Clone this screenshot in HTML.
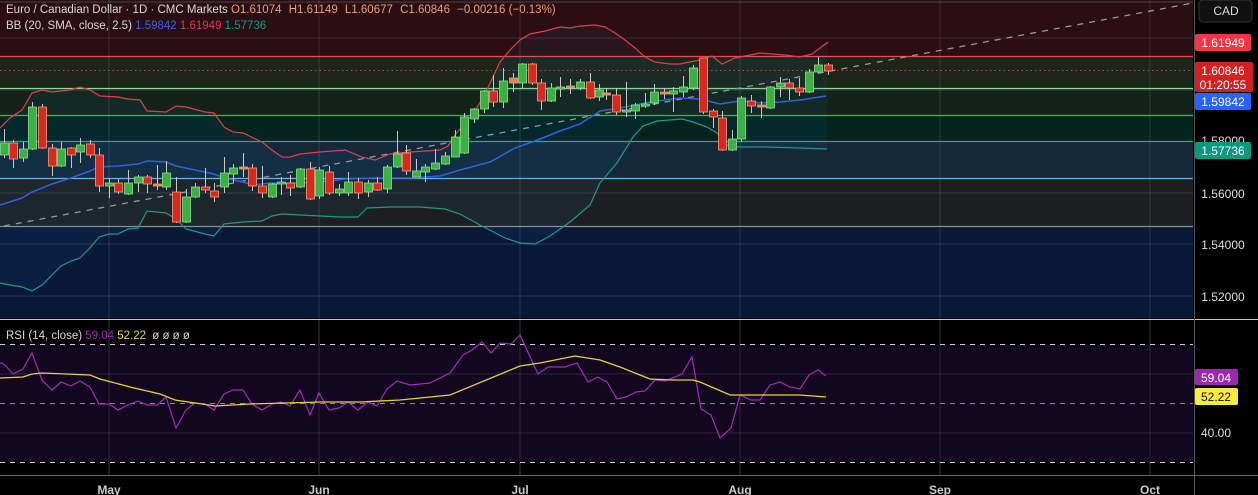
<!DOCTYPE html>
<html><head><meta charset="utf-8"><style>
html,body{margin:0;padding:0;background:#000;width:1258px;height:495px;overflow:hidden}
svg{display:block}
text{font-family:"Liberation Sans",sans-serif}
</style></head><body>
<svg id="s" width="1258" height="495" viewBox="0 0 1258 495" xmlns="http://www.w3.org/2000/svg">
<rect x="0" y="0" width="1258" height="495" fill="#000"/>
<rect x="0" y="0" width="1193" height="56" fill="#2a0e13"/>
<rect x="0" y="56" width="1193" height="32" fill="#1b2519"/>
<rect x="0" y="88" width="1193" height="27" fill="#13231a"/>
<rect x="0" y="115" width="1193" height="26" fill="#04231f"/>
<rect x="0" y="141" width="1193" height="37" fill="#14283a"/>
<rect x="0" y="178" width="1193" height="48" fill="#1d1e21"/>
<rect x="0" y="226" width="1193" height="92" fill="#0a1838"/>
<line x1="0" y1="2" x2="1193" y2="2" stroke="#444" stroke-width="1"/>
<g stroke="#ffffff" stroke-opacity="0.12" stroke-width="1">
<line x1="0" y1="38" x2="1193" y2="38"/><line x1="0" y1="90" x2="1193" y2="90"/><line x1="0" y1="193" x2="1193" y2="193"/><line x1="0" y1="244" x2="1193" y2="244"/><line x1="0" y1="296" x2="1193" y2="296"/>
<line x1="109" y1="0" x2="109" y2="475"/><line x1="319" y1="0" x2="319" y2="475"/><line x1="520" y1="0" x2="520" y2="475"/><line x1="740" y1="0" x2="740" y2="475"/><line x1="940" y1="0" x2="940" y2="475"/><line x1="1150" y1="0" x2="1150" y2="475"/>
</g>
<line x1="0" y1="56.5" x2="1193" y2="56.5" stroke="#e05050" stroke-width="1.2"/>
<line x1="0" y1="70.5" x2="1193" y2="70.5" stroke="#d84040" stroke-width="1" stroke-dasharray="1.5,3"/>
<line x1="0" y1="88.5" x2="1193" y2="88.5" stroke="#8fd88f" stroke-width="1.2"/>
<line x1="0" y1="115.5" x2="1193" y2="115.5" stroke="#4caf50" stroke-width="1.2"/>
<line x1="0" y1="141.5" x2="1193" y2="141.5" stroke="#26a69a" stroke-width="1.2"/>
<line x1="0" y1="178.5" x2="1193" y2="178.5" stroke="#64b5f6" stroke-width="1.2"/>
<line x1="0" y1="226.5" x2="1193" y2="226.5" stroke="#8a8f99" stroke-width="1.2"/>
<line x1="4" y1="226" x2="1193" y2="3" stroke="#9a9a9a" stroke-width="1.3" stroke-dasharray="6,6"/>
<g id="bb"></g>
<g id="cd"></g>
<line x1="0" y1="319.5" x2="1258" y2="319.5" stroke="#c8c8c8" stroke-width="1"/>
<line x1="1194.5" y1="0" x2="1194.5" y2="495" stroke="#555" stroke-width="1"/>
<rect x="0" y="344" width="1193" height="118" fill="#13061f"/>
<g stroke="#ffffff" stroke-opacity="0.12"><line x1="0" y1="374" x2="1193" y2="374"/><line x1="0" y1="433" x2="1193" y2="433"/>
<line x1="109" y1="320" x2="109" y2="475"/><line x1="319" y1="320" x2="319" y2="475"/><line x1="520" y1="320" x2="520" y2="475"/><line x1="740" y1="320" x2="740" y2="475"/><line x1="940" y1="320" x2="940" y2="475"/><line x1="1150" y1="320" x2="1150" y2="475"/></g>
<g stroke="#cfcfcf" stroke-dasharray="5,5" stroke-width="1"><line x1="0" y1="344.5" x2="1193" y2="344.5"/><line x1="0" y1="462.5" x2="1193" y2="462.5"/></g>
<line x1="0" y1="403.5" x2="1193" y2="403.5" stroke="#888" stroke-dasharray="5,5"/>
<polyline fill="none" stroke="#a22cb8" stroke-width="1.2" points="0,363 4,364 13,374 23,369 32,353 42,380 52,390 61,382 71,386 80,381 90,387 99,404 109,404 118,410 128,405 138,401 147,405 157,405 166,397 176,428 186,410 195,403 205,404 214,410 224,394 233,390 243,390 252,404 262,410 272,404 281,402 290,406 300,390 310,415 319,393 329,410 339,408 348,402 358,410 368,402 377,406 387,389 397,381 410,385 430,383 450,373 463,355 472,350 482,342 491,353 500,343 511,344 520,335 538,374 548,367 565,367 577,363 588,382 598,377 607,382 617,399 626,397 636,392 645,391 655,380 665,381 682,374 692,357 701,409 711,415 720,438 731,428 740,395 751,400 760,400 770,385 780,382 790,387 800,389 809,375 818,370 826,376"/>
<polyline fill="none" stroke="#e6d23a" stroke-width="1.3" points="0,378 23,377 32,374 42,373 90,375 100,379 130,387 160,394 175,400 215,406 250,404 320,402 360,402 400,400 450,395 520,366 540,363 575,356 600,360 620,367 650,379 673,380 693,380 700,382 730,395 740,395 800,395 826,397"/>
<line x1="0" y1="475.5" x2="1258" y2="475.5" stroke="#666" stroke-width="1"/>
<text x="6" y="13" font-size="11.5" fill="#d8d8d8">Euro / Canadian Dollar · 1D · CMC Markets <tspan fill="#f0a070">O1.61074</tspan> <tspan fill="#f0a070" dx="4">H1.61149</tspan> <tspan fill="#f0a070" dx="4">L1.60677</tspan> <tspan fill="#f0a070" dx="4">C1.60846</tspan> <tspan fill="#f0a070" dx="4">−0.00216 (−0.13%)</tspan></text>
<text x="6" y="29" font-size="11.5" fill="#d8d8d8">BB (20, SMA, close, 2.5) <tspan fill="#3d62e0">1.59842</tspan> <tspan fill="#e23a4a">1.61949</tspan> <tspan fill="#159a84">1.57736</tspan></text>
<text x="6" y="339" font-size="11.5" fill="#d8d8d8">RSI (14, close) <tspan fill="#9c2ab0">59.04</tspan> <tspan fill="#e8d83a">52.22</tspan> <tspan fill="#d8d8d8" dx="3">ø  ø  ø  ø</tspan></text>
<rect x="1199" y="0" width="53" height="22" rx="4" fill="#111" stroke="#333"/>
<text x="1218" y="15" font-size="12" fill="#ddd" text-anchor="middle" dx="8">CAD</text>
<rect x="1195" y="34" width="56" height="17" rx="2" fill="#f23645"/>
<text x="1223" y="47" font-size="12" fill="#fff" text-anchor="middle">1.61949</text>
<rect x="1195" y="62" width="58" height="30" rx="2" fill="#d32020"/>
<text x="1223" y="75" font-size="12" fill="#fff" text-anchor="middle">1.60846</text>
<text x="1223" y="89" font-size="12" fill="#fff" text-anchor="middle">01:20:55</text>
<rect x="1195" y="93" width="56" height="17" rx="2" fill="#2962ff"/>
<text x="1223" y="106" font-size="12" fill="#fff" text-anchor="middle">1.59842</text>
<text x="1223" y="145" font-size="12" fill="#ddd" text-anchor="middle">1.58000</text>
<rect x="1195" y="142" width="56" height="17" rx="2" fill="#089981"/>
<text x="1223" y="155" font-size="12" fill="#fff" text-anchor="middle">1.57736</text>
<text x="1223" y="198" font-size="12" fill="#ddd" text-anchor="middle">1.56000</text>
<text x="1223" y="249" font-size="12" fill="#ddd" text-anchor="middle">1.54000</text>
<text x="1223" y="301" font-size="12" fill="#ddd" text-anchor="middle">1.52000</text>
<rect x="1195" y="369" width="43" height="16" rx="2" fill="#9c27b0"/>
<text x="1216" y="382" font-size="12" fill="#fff" text-anchor="middle">59.04</text>
<rect x="1195" y="388" width="43" height="17" rx="2" fill="#ffeb3b"/>
<text x="1216" y="401" font-size="12" fill="#111" text-anchor="middle">52.22</text>
<text x="1216" y="437" font-size="12" fill="#ddd" text-anchor="middle">40.00</text>
<g font-size="12" fill="#ccc" font-weight="bold" text-anchor="middle">
<text x="109" y="494">May</text><text x="319" y="494">Jun</text><text x="520" y="494">Jul</text><text x="740" y="494">Aug</text><text x="940" y="494">Sep</text><text x="1150" y="494">Oct</text></g>
</svg>
<script>
var NS="http://www.w3.org/2000/svg";
function el(p,t,a){var e=document.createElementNS(NS,t);for(var k in a)e.setAttribute(k,a[k]);p.appendChild(e);return e;}
var up="0,128 10,118 22,110 32,93 42,90 52,92 70,90 80,87 90,90 100,96 118,97 128,99 140,100 147,111 166,112 176,106 186,107 205,112 214,113 224,127 233,132 243,133 262,142 272,150 282,157 290,157 300,154 320,152 345,150 362,157 375,160 390,154 410,152 440,150 448,146 455,135 475,111 485,94 500,62 510,50 520,40 530,34 545,31 560,27 570,28 580,26 595,25 605,27 615,33 625,40 635,48 645,57 655,62 670,64 680,64 700,60 712,56 722,64 735,58 760,53 785,55 800,57 812,54 828,42";
var mid="0,205 22,198 32,192 52,184 71,178 90,171 99,167 118,166 138,164 147,161 166,162 176,166 195,170 214,174 224,178 243,182 252,185 272,183 300,183 330,181 345,179 375,178 410,178 440,176 460,170 490,162 515,148 535,141 560,131 580,124 600,111 620,108 650,102 680,98 700,99 720,104 740,101 760,103 780,102 800,100 826,96";
var lo="0,283 10,285 22,287 32,291 42,285 52,275 61,266 71,261 80,258 90,248 99,237 109,234 118,234 128,229 138,228 147,211 166,213 176,219 186,229 205,234 214,236 224,224 243,222 262,221 272,216 282,214 300,215 320,216 340,217 358,217 367,208 390,207 420,207 445,209 460,214 480,225 505,238 520,243 535,244 550,236 570,222 590,205 600,183 617,163 633,137 643,126 657,121 682,119 693,122 707,127 717,133 728,146 737,147 767,147 800,148 827,149";
var bb=document.getElementById("bb");
var rl=lo.split(" ").reverse().join(" ");
el(bb,"polygon",{points:up+" "+rl,fill:"#2196f3","fill-opacity":"0.06"});
el(bb,"polyline",{points:up,fill:"none",stroke:"#e0404f","stroke-width":"1.2"});
el(bb,"polyline",{points:mid,fill:"none",stroke:"#2f62e0","stroke-width":"1.5"});
el(bb,"polyline",{points:lo,fill:"none",stroke:"#1f9a8a","stroke-width":"1.2"});
var C=[[4,'G',143,155,129,158],[13,'R',143,159,140,168],[23,'G',149,158,142,162],[32,'G',107,149,102,150],[42,'R',107,148,104,149],[52,'R',148,166,144,176],[61,'G',149,166,142,167],[71,'R',148,155,147,168],[80,'G',145,152,138,163],[90,'R',144,155,140,158],[99,'R',155,186,148,192],[109,'G',183,186,179,198],[118,'R',183,192,179,194],[128,'G',183,194,170,195],[138,'G',177,183,175,192],[147,'R',177,184,175,193],[157,'D',184,186,165,190],[166,'G',173,187,161,190],[176,'R',192,222,177,223],[186,'G',197,222,189,223],[195,'G',187,197,183,198],[205,'R',187,190,168,193],[214,'R',191,197,183,202],[224,'G',173,187,157,193],[233,'G',168,174,164,183],[243,'D',167,169,153,177],[252,'R',168,186,164,191],[262,'R',186,193,166,198],[272,'G',184,197,183,198],[281,'G',182,184,177,195],[290,'R',183,188,175,196],[300,'G',169,187,168,188],[310,'R',169,199,162,200],[319,'G',170,196,167,199],[329,'R',172,193,166,195],[339,'G',189,193,184,196],[348,'G',182,193,172,196],[358,'R',182,193,178,199],[368,'G',183,192,180,197],[377,'R',183,190,177,191],[387,'G',167,189,165,193],[397,'G',154,167,131,168],[406,'R',153,171,145,175],[416,'G',171,177,159,177],[425,'G',167,172,164,182],[435,'G',163,169,149,170],[445,'G',156,164,152,165],[455,'G',137,157,130,157],[464,'G',117,153,113,154],[474,'G',109,119,108,123],[484,'G',91,109,90,113],[493,'R',91,102,75,107],[503,'G',81,102,68,108],[513,'D',78,83,73,92],[522,'G',64,83,63,88],[532,'R',64,83,63,85],[541,'R',83,101,79,110],[551,'G',88,101,83,102],[560,'G',87,89,77,97],[570,'D',86,88,79,94],[580,'G',82,88,79,90],[590,'R',82,98,73,99],[599,'G',90,97,84,101],[606,'D',93,95,88,100],[616,'R',95,112,88,115],[626,'G',110,112,82,117],[635,'G',105,111,103,119],[645,'G',104,106,93,108],[654,'G',92,103,84,105],[664,'D',92,94,88,99],[673,'G',91,94,87,112],[683,'G',87,92,76,97],[693,'G',68,88,65,90],[703,'R',58,112,58,114],[713,'R',111,117,109,128],[722,'R',118,150,111,151],[732,'G',139,150,130,151],[741,'G',98,139,96,142],[751,'R',101,106,95,113],[761,'D',105,107,101,118],[770,'G',87,108,86,109],[780,'G',83,87,77,97],[789,'R',83,88,79,100],[799,'R',88,92,78,96],[809,'G',72,92,69,93],[818,'G',65,72,57,73],[828,'R',65,71,63,75]];
var cd=document.getElementById("cd");
C.forEach(function(c){
 var x=c[0],t=c[1];
 el(cd,"line",{x1:x+0.5,x2:x+0.5,y1:c[4],y2:c[5],stroke:"#c8c8c8","stroke-width":"1"});
 var f=t=='G'?'#3cb044':(t=='R'?'#d42a20':'#e08060');
 var s=t=='G'?'#8ee08e':(t=='R'?'#f2a080':'#f0a070');
 var h=Math.max(c[3]-c[2],2);
 el(cd,"rect",{x:x-3.5,y:c[2],width:8,height:h,fill:f,stroke:s,"stroke-width":"0.8"});
});
</script>
</body></html>
